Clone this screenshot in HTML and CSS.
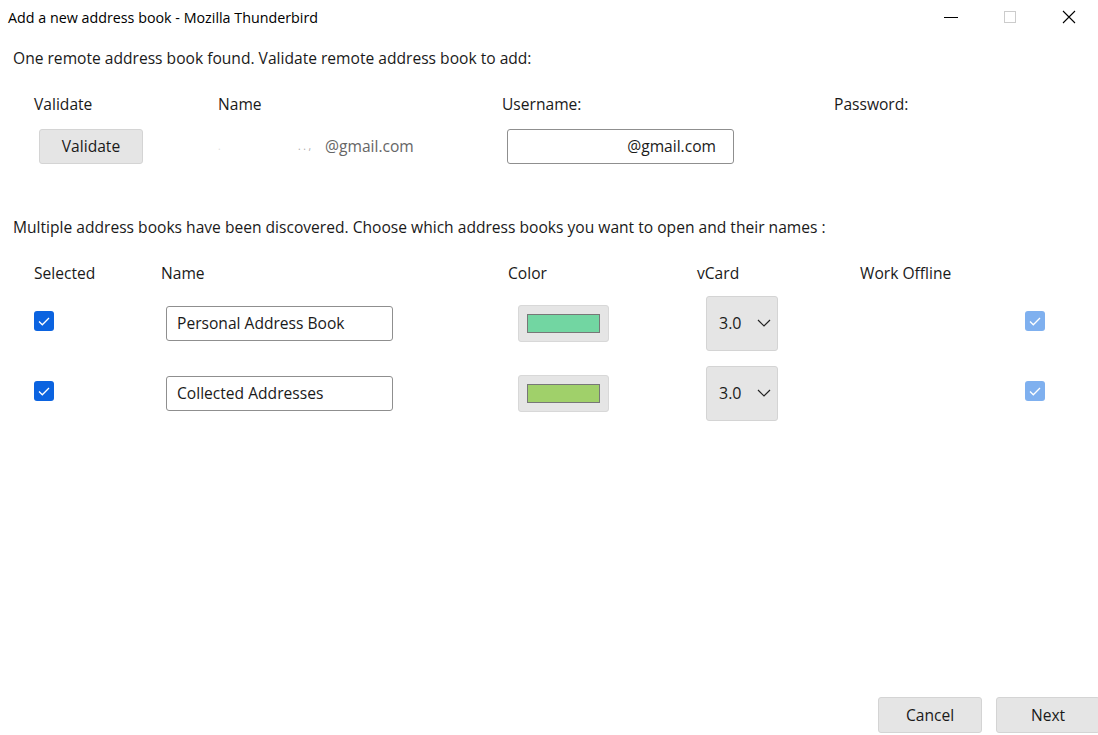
FILE: index.html
```html
<!DOCTYPE html>
<html lang="en">
<head>
  <meta charset="UTF-8">
  <title>Add a new address book - Mozilla Thunderbird</title>
  <link rel="stylesheet" href="styles.css">
</head>
<body>
  <div class="window">
    <div class="titlebar">
      <span class="title">Add a new address book - Mozilla Thunderbird</span>
      <div class="win-controls">
        <span class="win-btn">
          <svg width="14" height="14" viewBox="0 0 14 14"><path d="M0 7.5h14" stroke="#000" stroke-width="1"/></svg>
        </span>
        <span class="win-btn">
          <svg width="12" height="12" viewBox="0 0 12 12"><rect x="0.5" y="0.5" width="11" height="11" fill="none" stroke="#ccc"/></svg>
        </span>
        <span class="win-btn">
          <svg width="14" height="14" viewBox="0 0 14 14"><path d="M1 1L13 13M13 1L1 13" stroke="#000" stroke-width="1.1"/></svg>
        </span>
      </div>
    </div>

    <div class="content">
      <p class="section-text">One remote address book found. Validate remote address book to add:</p>

      <div class="remote-grid">
        <div class="col-label">Validate</div>
        <div class="col-label">Name</div>
        <div class="col-label">Username:</div>
        <div class="col-label">Password:</div>

        <div><button class="btn validate-btn">Validate</button></div>
        <div class="remote-name">
          <span class="redact redact-first">.</span><span class="redact redact-mid">. . ,</span><span>@gmail.com</span>
        </div>
        <div><div class="text-input user-input">@gmail.com</div></div>
        <div></div>
      </div>

      <p class="section-text multi-text">Multiple address books have been discovered. Choose which address books you want to open and their names :</p>

      <div class="books-grid">
        <div class="col-label">Selected</div>
        <div class="col-label">Name</div>
        <div class="col-label">Color</div>
        <div class="col-label">vCard</div>
        <div class="col-label">Work Offline</div>
        <div></div>

        <div class="cell"><span class="check"><svg width="20" height="20" viewBox="0 0 20 20"><path d="M5 10.5l3.3 3.3L15 7" fill="none" stroke="#fff" stroke-width="1.3"/></svg></span></div>
        <div class="cell"><div class="text-input name-input">Personal Address Book</div></div>
        <div class="cell"><span class="color-btn"><span class="swatch swatch-green"></span></span></div>
        <div class="cell"><span class="select">3.0 <svg width="14" height="8" viewBox="0 0 14 8"><path d="M1 1l6 6 6-6" fill="none" stroke="#222" stroke-width="1.2"/></svg></span></div>
        <div class="cell"></div>
        <div class="cell"><span class="check check-off"><svg width="20" height="20" viewBox="0 0 20 20"><path d="M5 10.5l3.3 3.3L15 7" fill="none" stroke="#fff" stroke-width="1.3"/></svg></span></div>

        <div class="cell"><span class="check"><svg width="20" height="20" viewBox="0 0 20 20"><path d="M5 10.5l3.3 3.3L15 7" fill="none" stroke="#fff" stroke-width="1.3"/></svg></span></div>
        <div class="cell"><div class="text-input name-input">Collected Addresses</div></div>
        <div class="cell"><span class="color-btn"><span class="swatch swatch-lime"></span></span></div>
        <div class="cell"><span class="select">3.0 <svg width="14" height="8" viewBox="0 0 14 8"><path d="M1 1l6 6 6-6" fill="none" stroke="#222" stroke-width="1.2"/></svg></span></div>
        <div class="cell"></div>
        <div class="cell"><span class="check check-off"><svg width="20" height="20" viewBox="0 0 20 20"><path d="M5 10.5l3.3 3.3L15 7" fill="none" stroke="#fff" stroke-width="1.3"/></svg></span></div>
      </div>
    </div>

    <div class="footer">
      <button class="btn footer-btn">Cancel</button>
      <button class="btn footer-btn">Next</button>
    </div>
  </div>
</body>
</html>
```

FILE: styles.css
```css
* {
  margin: 0;
  padding: 0;
  box-sizing: border-box;
}

body {
  font-family: "Open Sans", "Noto Sans", sans-serif;
  background-color: #fff;
  color: #1a1a1a;
  overflow: hidden;
}

.window {
  width: 1098px;
  height: 735px;
  display: flex;
  flex-direction: column;
}

.titlebar {
  height: 34px;
  display: flex;
  align-items: center;
  justify-content: space-between;
  padding-left: 8px;
}

.title {
  font-size: 14.3px;
  color: #000;
}

.win-controls {
  display: flex;
  height: 100%;
}

.win-btn {
  width: 59px;
  display: flex;
  align-items: center;
  justify-content: center;
}

.content {
  padding: 0 13px;
  flex: 1;
}

.section-text {
  font-size: 15.6px;
  line-height: 20px;
  margin-top: 14px;
}

.remote-grid {
  display: grid;
  grid-template-columns: 184px 284px 332px 1fr;
  grid-template-rows: 28px 56px;
  padding-left: 21px;
  margin-top: 22px;
  align-items: center;
}

.col-label {
  font-size: 15.6px;
}

.btn {
  font-family: inherit;
  font-size: 15.6px;
  color: #1a1a1a;
  background-color: #e5e5e5;
  border: 1px solid #d4d4d4;
  border-radius: 3px;
}

.validate-btn {
  width: 104px;
  height: 35px;
  margin-left: 5px;
}

.remote-name {
  font-size: 15.6px;
  color: #666;
  display: flex;
  align-items: center;
}

.redact {
  display: inline-block;
  font-size: 10px;
  color: #aaa;
}

.redact-first {
  width: 80px;
  color: #ddd;
}

.redact-mid {
  width: 27px;
}

.text-input {
  height: 35px;
  border: 1px solid #8f8f8f;
  border-radius: 3px;
  font-size: 15.6px;
  display: flex;
  align-items: center;
}

.user-input {
  width: 227px;
  margin-left: 5px;
  justify-content: flex-end;
  padding-right: 17px;
}

.multi-text {
  margin-top: 43px;
}

.books-grid {
  display: grid;
  grid-template-columns: 127px 347px 189px 163px 165px 20px;
  grid-template-rows: 31px 70px 70px;
  padding-left: 21px;
  margin-top: 20px;
  align-items: center;
}

.cell {
  display: flex;
  align-items: center;
}

.check {
  width: 20px;
  height: 20px;
  border-radius: 3px;
  background-color: #0b63e0;
  display: block;
  margin-top: -5px;
}

.check svg {
  display: block;
}

.check-off {
  background-color: #7fb0ef;
}

.name-input {
  width: 227px;
  margin-left: 5px;
  padding-left: 10px;
}

.color-btn {
  width: 91px;
  height: 37px;
  margin-left: 10px;
  background-color: #e5e5e5;
  border: 1px solid #d8d8d8;
  border-radius: 3px;
  display: flex;
  align-items: center;
  justify-content: center;
}

.swatch {
  width: 73px;
  height: 19px;
  border: 1px solid #777;
}

.swatch-green {
  background-color: #72d6a2;
}

.swatch-lime {
  background-color: #a0d06a;
}

.select {
  width: 72px;
  height: 55px;
  margin-left: 9px;
  background-color: #e5e5e5;
  border: 1px solid #d4d4d4;
  border-radius: 3px;
  font-size: 16px;
  display: flex;
  align-items: center;
  justify-content: space-between;
  padding: 0 6px 0 12px;
}

.footer {
  display: flex;
  justify-content: flex-end;
  gap: 14px;
  padding-bottom: 2px;
  margin-right: -2px;
}

.footer-btn {
  width: 104px;
  height: 36px;
}
```
